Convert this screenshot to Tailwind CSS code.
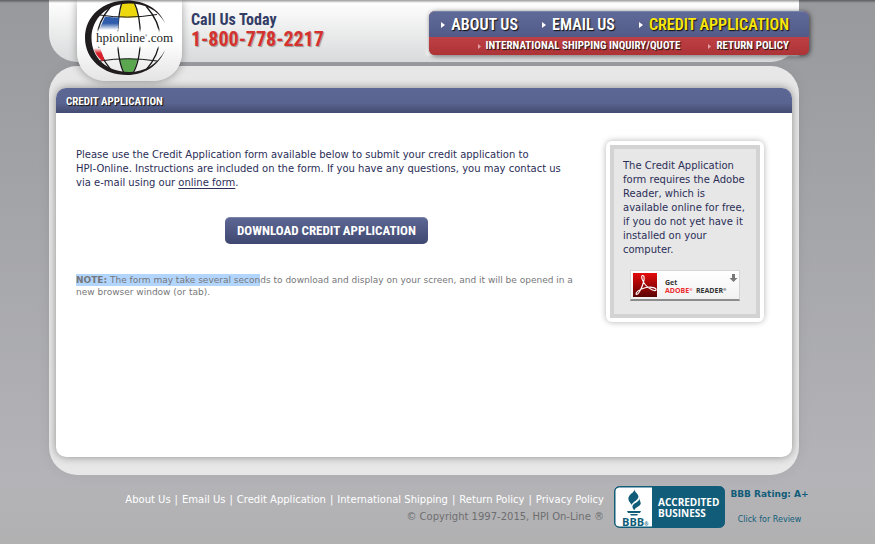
<!DOCTYPE html>
<html lang="en">
<head>
<meta charset="utf-8">
<meta name="viewport" content="width=device-width, initial-scale=1">
<title>Credit Application - HPI Online</title>
<script src="https://cdn.jsdelivr.net/npm/@tailwindcss/browser@4"></script>
</head>
<body class="min-h-screen bg-linear-to-b from-[#98999d] via-[#b4b4b8] via-88% to-[#b1b1b2] font-['Verdana','DejaVu_Sans',sans-serif] text-[10px] text-[#2b2e57]">
<div class="h-[3px] -mb-[3px] relative z-20 bg-linear-to-b from-black/40 to-transparent"></div>
<div class="mx-auto max-w-[777px] pr-[27px]">

  <header class="relative z-10 flex h-[62px] rounded-b-[28px] bg-linear-to-b from-white to-[#d9dadb] pl-[142px] font-['Roboto_Condensed','Liberation_Sans_Narrow','DejaVu_Sans_Condensed',sans-serif] font-bold">
    <a href="#" aria-label="hpionline.com home" class="absolute left-7 top-0 h-[81px] w-[105px] rounded-b-[28px] bg-linear-to-b from-white via-white via-50% to-[#e4e4e5] shadow-[0_1px_8px_rgba(0,0,0,0.35)]">
      <svg viewBox="0 0 105 81" class="h-[81px] w-[105px]">
        <defs>
          <linearGradient id="blue" x1="0" y1="0" x2="0" y2="1"><stop offset=".5" stop-color="#2f5dab"/><stop offset="1" stop-color="#fff"/></linearGradient>
          <linearGradient id="red" x1="0" y1="0" x2="0" y2="1"><stop offset="0" stop-color="#fff"/><stop offset=".4" stop-color="#d9202a"/></linearGradient>
          <linearGradient id="band" x1="0" y1="0" x2="0" y2="1"><stop offset="0" stop-color="#fff" stop-opacity="0"/><stop offset=".2" stop-color="#fff"/><stop offset=".85" stop-color="#fff"/><stop offset="1" stop-color="#fff" stop-opacity="0"/></linearGradient>
        </defs>
        <path d="M45 2Q51 0 57 2Q60 9 61 17Q52 18 43 17Q43 9 45 2Z" fill="#ecd80d"/>
        <path d="M42.500 59Q52 58 60.500 59Q59 67 56 72Q51 74 47 72Q44 66 42.500 59Z" fill="#5ba750"/>
        <g fill="none" stroke="#171717" stroke-width="1.3">
          <path d="M45 2Q41 14 40.500 37Q41 62 47 73"/>
          <path d="M57 2Q63 14 63.500 37Q63 62 56 73"/>
          <path d="M34 6Q20 23 20 38Q21 54 34 70"/>
          <path d="M69 6Q83 22 83 38Q82 55 69 70"/>
          <path d="M23 15Q50 19.500 80 14.500" stroke-width="1"/>
          <path d="M23 61Q50 56.500 80 61" stroke-width="1"/>
        </g>
        <path d="M14 28H64V49H14ZM64 28H92V49H64Z" fill="url(#band)"/>
        <path d="M28 16.500Q35 17.500 42 17.500L41 30H22Z" fill="url(#blue)"/>
        <path d="M88 23C82 9 68 .5 50 .5C26 .5 8 16 8 38C8 59 26 75 50 75C68 75 82 65 88 50C81 64 68 72 52 72C30 72 14.500 58 14.500 38C14.500 18 31 3.500 52 3.500C68 3.500 81 10 88 23Z" fill="#211d1e"/>
        <path d="M16.500 48H23L27.500 60L25 61Q19 56 16.500 48Z" fill="url(#red)"/>
        <text x="19" y="42" font-family="Liberation Serif, serif" font-size="13" font-weight="400" fill="#222">hpionline<tspan font-size="3" dy="-5">®</tspan><tspan dy="5">.com</tspan></text>
      </svg>
    </a>
    <div class="pt-[11px]">
      <div class="text-base leading-[18px] text-[#333d66]">Call Us Today</div>
      <div class="text-xl leading-5 text-[#d5322f] [text-shadow:1px_1px_1px_#999]">1-800-778-2217</div>
    </div>
    <nav aria-label="Main" class="-mr-[10px] ml-auto mt-[11px] h-11 w-[380px] rounded-md bg-[#b2373b] text-white shadow-[1px_1px_5px_rgba(0,0,0,0.6),-6px_4px_2px_-3px_#f7f7f7] [text-shadow:1px_1px_1px_#111]">
      <div class="flex h-[26px] items-center justify-end gap-6 rounded-t-md border-t border-[#7782aa] bg-linear-to-b from-[#606a99] to-[#525b88] pr-5 text-base font-semibold">
        <a href="#" class="flex items-center gap-[6px]"><svg viewBox="0 0 4 6" class="h-[6px] w-1" fill="#fff"><path d="M0 0L4 3L0 6Z"/></svg>ABOUT US</a>
        <a href="#" class="flex items-center gap-[6px]"><svg viewBox="0 0 4 6" class="h-[6px] w-1" fill="#fff"><path d="M0 0L4 3L0 6Z"/></svg>EMAIL US</a>
        <a href="#" class="flex items-center gap-[6px] text-[#fae80c]"><svg viewBox="0 0 4 6" class="h-[6px] w-1" fill="#fff"><path d="M0 0L4 3L0 6Z"/></svg>CREDIT APPLICATION</a>
      </div>
      <div class="flex h-[18px] items-center justify-end gap-7 rounded-b-md bg-linear-to-b from-[#be4044] to-[#ad3337] pr-5 text-[11px]">
        <a href="#" class="flex items-center gap-[5px]"><svg viewBox="0 0 3 5" class="h-[5px] w-[3px]" fill="#e3a4a6"><path d="M0 0L3 2.500L0 5Z"/></svg>INTERNATIONAL SHIPPING INQUIRY/QUOTE</a>
        <a href="#" class="flex items-center gap-[5px]"><svg viewBox="0 0 3 5" class="h-[5px] w-[3px]" fill="#e3a4a6"><path d="M0 0L3 2.500L0 5Z"/></svg>RETURN POLICY</a>
      </div>
    </nav>
  </header>

  <main class="mt-1 rounded-[28px] bg-[#e7e7e7] px-[7px] pb-[18px] pt-[22px] shadow-[0_0_14px_rgba(0,0,0,0.06)]">
    <section class="min-h-[369px] overflow-hidden rounded-[10px] bg-white shadow-[0_0_8px_rgba(0,0,0,0.4)]">
      <h1 class="h-[25px] bg-linear-to-b from-[#5c6795] via-[#5a6490] via-60% to-[#434b71] pl-[10px] font-['Roboto_Condensed','Liberation_Sans_Narrow','DejaVu_Sans_Condensed',sans-serif] text-[11px] font-bold leading-7 text-white [text-shadow:1px_1px_1px_#111]">CREDIT APPLICATION</h1>
      <div class="flex items-start pl-5 pr-7 pt-7">
        <div class="flex-1 pt-[7px]">
          <p class="pr-7 leading-[14px]">Please use the Credit Application form available below to submit your credit application to<br>HPI-Online. Instructions are included on the form. If you have any questions, you may contact us<br>via e-mail using our <a href="#" class="underline underline-offset-2">online form</a>.</p>
          <button type="button" class="ml-[149px] mt-[27px] block h-[27px] rounded-[5px] border-t border-[#7a83a8] bg-linear-to-b from-[#5d6794] to-[#3f4870] px-3 font-['Roboto_Condensed','Liberation_Sans_Narrow','DejaVu_Sans_Condensed',sans-serif] text-[13px] font-bold text-white">DOWNLOAD CREDIT APPLICATION</button>
          <p class="mt-[30px] text-[9px] leading-3 text-[#77777a]"><span class="bg-[#b2d5fd] py-px"><b>NOTE:</b> The form may take several secon</span>ds to download and display on your screen, and it will be opened in a<br>new browser window (or tab).</p>
        </div>
        <aside class="w-[158px] rounded-md bg-white p-1 shadow-[0_0_6px_rgba(0,0,0,0.3)]">
          <div class="border-4 border-[#d3d3d4] bg-[#e7e7e7] px-[9px] pb-[13px] pt-[10px]">
            <p class="leading-[14px]">The Credit Application<br>form requires the Adobe<br>Reader, which is<br>available online for free,<br>if you do not yet have it<br>installed on your<br>computer.</p>
            <a href="#" aria-label="Get Adobe Reader" class="ml-[7px] mt-[13px] block h-[31px] w-[110px] border border-b-2 border-[#d5d5d5] border-b-[#8c8c8c] bg-linear-to-b from-white to-[#f1f1f1]">
              <svg viewBox="0 0 108 28" class="h-7 w-[108px]" font-family="Open Sans, sans-serif" font-weight="700">
                <defs><linearGradient id="pdf" x1="0" y1="0" x2="0" y2="1"><stop offset="0" stop-color="#e40b0b"/><stop offset="1" stop-color="#5a0303"/></linearGradient></defs>
                <rect x="2" y="2" width="24" height="24" fill="url(#pdf)"/>
                <path d="M11.500 4.500C13.500 4 13.500 8 12.500 11C11 17 7.500 23.500 5.500 23.500C3.500 22.500 8 18 15 16.500C21 15.500 25.500 17 25 19C24 21 17.500 17.500 14.500 14C11.500 10.500 9.500 5 11.500 4.500Z" fill="none" stroke="#fff" stroke-width="1.100"/>
                <path d="M101 3H104V7H106.500L102.500 11L98.500 7H101Z" fill="#777"/>
                <text x="34" y="14" font-size="7" fill="#333">Get</text>
                <text x="34" y="22" font-size="7" fill="#ee2b2e">ADOBE<tspan font-size="4" dy="-2">®</tspan></text>
                <text x="65" y="22" font-size="7" fill="#333">READER<tspan font-size="4" dy="-2">®</tspan></text>
              </svg>
            </a>
          </div>
        </aside>
      </div>
    </section>
  </main>

  <footer class="-mr-[11px] flex items-start justify-end pt-[11px]">
    <div class="pr-[10px] pt-[5px] text-right leading-[17px]">
      <nav aria-label="Footer" class="flex justify-end gap-1 text-white"><a href="#">About Us</a><span>|</span><a href="#">Email Us</a><span>|</span><a href="#">Credit Application</a><span>|</span><a href="#">International Shipping</a><span>|</span><a href="#">Return Policy</a><span>|</span><a href="#">Privacy Policy</a></nav>
      <p class="text-[#6e6e70]">© Copyright 1997-2015, HPI On-Line ®</p>
    </div>
    <a href="#" aria-label="BBB Accredited Business">
      <svg viewBox="0 0 111 42" class="h-[42px] w-[111px]" font-family="Open Sans, sans-serif" font-weight="700">
        <rect x=".5" y=".5" width="110" height="41" rx="5" fill="#115d79" stroke="#115d79"/>
        <path d="M5 1.500H38V40.500H5Q1.500 40 1.500 37V5Q1.500 2 5 1.500Z" fill="#fff"/>
        <g fill="#115d79">
          <path d="M20.500 3C20 7 27 8.500 23.500 13C21.500 15.500 18 16.500 18 19C15 15.500 13 13 15.500 9.500C17 7.500 20.500 6 20.500 3Z"/>
          <path d="M25.500 11.500C25 15 28.500 17 25.500 19.500C23 21.500 20.500 22 20.500 24.500C18 22 17.500 20 20.500 17.500C23 16 25.500 15 25.500 11.500Z"/>
          <path d="M13 25H27L26 27H14ZM16 28H24L23 29.500H17Z"/>
          <text x="8" y="40" font-size="11">BBB<tspan font-size="5">®</tspan></text>
        </g>
        <text x="44" y="20" font-size="10" font-weight="700" fill="#fff">ACCREDITED</text>
        <text x="44" y="31" font-size="10" font-weight="700" fill="#fff">BUSINESS</text>
      </svg>
    </a>
    <div class="w-[85px] pl-1 text-center text-[#115d79]">
      <p class="whitespace-nowrap text-[9px] font-bold leading-4">BBB Rating: A+</p>
      <a href="#" class="mt-[10px] block whitespace-nowrap text-[8px] leading-4">Click for Review</a>
    </div>
  </footer>
</div>
</body>
</html>
